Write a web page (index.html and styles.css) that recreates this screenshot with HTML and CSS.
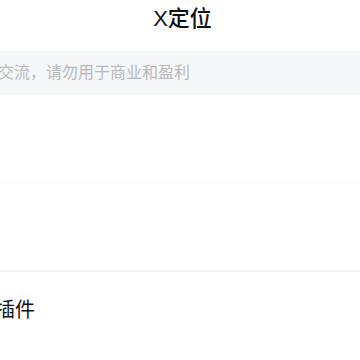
FILE: index.html
```html
<!DOCTYPE html>
<html lang="zh-CN">
<head>
<meta charset="utf-8">
<title>X定位</title>
<link rel="stylesheet" href="styles.css">
</head>
<body>
<div class="page">
  <header class="nav">
    <h1 class="nav-title">X定位</h1>
  </header>
  <div class="notice">
    <span class="notice-text">交流，请勿用于商业和盈利</span>
  </div>
  <div class="row"></div>
  <div class="row row-faint"></div>
  <div class="row row-label">
    <span class="label">插件</span>
  </div>
</div>
</body>
</html>
```

FILE: styles.css
```css
html, body {
  margin: 0;
  padding: 0;
  background: #ffffff;
}
body {
  font-family: "Liberation Sans", "Noto Sans CJK SC", sans-serif;
  color: #111111;
  overflow: hidden;
}
.page {
  width: 360px;
  height: 360px;
  display: flex;
  flex-direction: column;
}
.nav {
  height: 51px;
  display: flex;
  align-items: flex-start;
  justify-content: center;
  padding-left: 5px;
  box-sizing: border-box;
}
.nav-title {
  margin: 0;
  padding-top: 4px;
  font-size: 22px;
  line-height: 30px;
  font-weight: 500;
  color: #111111;
}
.notice {
  height: 44px;
  background: #f6f7f9;
  display: flex;
  align-items: center;
  overflow: hidden;
}
.notice-text {
  margin-left: -2px;
  font-size: 16px;
  line-height: 20px;
  color: #b7b8bc;
  white-space: nowrap;
}
.row {
  height: 87px;
  border-bottom: 1px solid #f8f8f8;
  flex: none;
}
.row-faint {
  border-bottom: 2px solid #f2f2f2;
  height: 87px;
}
.row-label {
  border-bottom: none;
  display: flex;
  align-items: flex-start;
  padding-top: 24px;
  box-sizing: border-box;
  overflow: hidden;
}
.label {
  margin-left: -5px;
  font-size: 20px;
  line-height: 28px;
  color: #111111;
  white-space: nowrap;
}
```
